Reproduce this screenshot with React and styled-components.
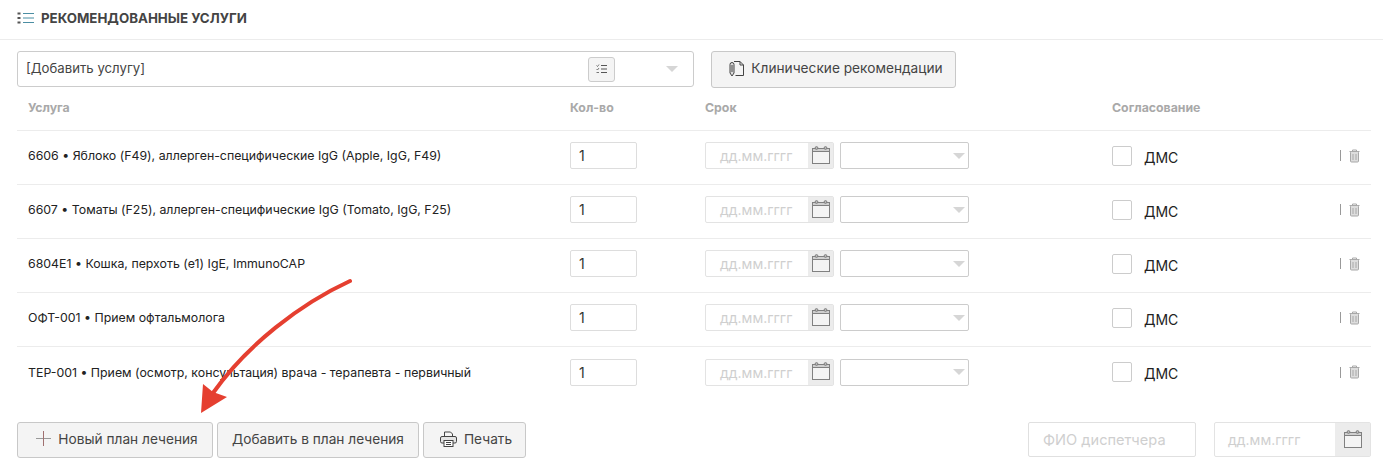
import React from "react";
import styled, { createGlobalStyle } from "styled-components";

const FONT = `"Inter", "Open Sans", "Liberation Sans", sans-serif`;
const Global = createGlobalStyle`
  html, body { margin: 0; padding: 0; background: #fff; }
  body { font-family: ${FONT}; color: #222; }
`;
const Page = styled.div`position: relative; width: 1383px; height: 475px; overflow: hidden;`;
const Header = styled.div`
  border-bottom: 1px solid #ececec; display: flex; align-items: center;
  gap: 7px; padding: 0 0 3px 17px; box-sizing: border-box; height: 40px;
`;
const Title = styled.h2`margin: 0; font-size: 13.300px; font-weight: 700; color: #444;`;
const Body = styled.div`padding: 11px 12px 0 17px;`;
const TopRow = styled.div`display: flex; gap: 17px; height: 37px;`;
const Select = styled.div`
  width: 677px; height: 36px; box-sizing: border-box; border: 1px solid #ccc; border-radius: 3px;
  display: flex; align-items: center; padding: 0 15px 3px 8px; font-size: 13.200px; color: #444;
`;
const SelectText = styled.span`flex: 1;`;
const ListBtn = styled.span`
  width: 27px; height: 25px; box-sizing: border-box; border: 1px solid #ccc; border-radius: 3px;
  background: #f4f4f4; display: flex; align-items: center; justify-content: center; margin: 3px 51px 0 0;
`;
const Caret = styled.span`
  width: 0; height: 0; border-left: 6.500px solid transparent; border-right: 6.500px solid transparent;
  border-top: 6px solid #d6d6d6; margin-top: ${p => p.$mt || 0}px;
`;
const Button = styled.button`
  height: ${p => p.$h || 36}px; width: ${p => p.$w}px; box-sizing: border-box; border: 1px solid #c8c8c8;
  border-radius: 3px; background: #f4f4f4; font: 13.700px ${FONT};
  color: #444; display: flex; align-items: center; justify-content: center; gap: 7px;
  padding: 0 0 3px ${p => p.$shift || 0}px;
`;
const Grid = styled.div`
  display: grid; grid-template-columns: 553px 135px 407px 259px;
`;
const HeadCell = styled.div`
  height: 43px; display: flex; align-items: center; padding: 0 0 3px ${p => p.$pad || 0}px;
  font-size: 12.300px; font-weight: 700; color: #a9a9a9; border-bottom: 1px solid #ececec; box-sizing: border-box;
`;
const Cell = styled.div`
  height: 54px; box-sizing: border-box; display: flex; align-items: center; padding-bottom: 4px;
  border-bottom: ${p => p.$last ? "none" : "1px solid #ececec"};
`;
const Service = styled(Cell)`padding-left: 11px; font-size: 12.350px; color: #222;`;
const Qty = styled.div`
  width: 67px; height: 27px; box-sizing: border-box; border: 1px solid #ddd; border-radius: 2px;
  font-size: 14px; color: #333; padding-left: 8px; display: flex; align-items: center;
`;
const DateBox = styled.div`
  width: ${p => p.$w}px; height: ${p => p.$h}px; box-sizing: border-box; border: 1px solid #e3e3e3; border-radius: 2px;
  display: flex; align-items: center; font-size: 14px; color: #cfcfcf;
`;
const DateText = styled.span`flex: 1; padding-left: ${p => p.$pad}px;`;
const CalBox = styled.span`
  width: ${p => p.$w}px; align-self: stretch; background: #ececec; display: flex; align-items: center; justify-content: center;
`;
const SmallSelect = styled.div`
  width: 129px; height: 27px; margin-left: 6px; box-sizing: border-box; border: 1px solid #ccc; border-radius: 2px;
  display: flex; align-items: center; justify-content: flex-end; padding-right: 3px;
`;
const Check = styled.span`
  width: 20px; height: 20px; box-sizing: border-box; border: 1px solid #ccc; border-radius: 2px; margin-right: 12px;
`;
const Dms = styled.span`font-size: 14px; color: #222; flex: 1; padding-top: 3px;`;
const Sep = styled.span`width: 1px; height: 11px; background: #999; margin: 0 8px 0 1px;`;
const TrashWrap = styled.span`display: flex; margin-right: 11px;`;
const Footer = styled.div`display: flex; margin-top: 21px; gap: 4px; align-items: flex-start;`;
const Spacer = styled.div`flex: 1;`;
const Field = styled.div`
  width: 168px; height: 35px; box-sizing: border-box; border: 1px solid #e0e0e0; border-radius: 2px;
  display: flex; align-items: center; padding-left: 14px; font-size: 14.600px; color: #cfcfcf; margin-right: 14px;
`;
const ArrowLayer = styled.svg`position: absolute; left: 0; top: 0; pointer-events: none;`;

const Cal = () => (
  <svg width="20" height="20" viewBox="0 0 20 20" fill="none" stroke="#808080" strokeWidth="1">
    <rect x="1.500" y="2.500" width="17" height="15" fill="#f4f4f4" />
    <rect x="1.500" y="2.500" width="17" height="3" fill="#cfcfcf" />
    <circle cx="5.500" cy="2" r="1.400" fill="#bbb" />
    <circle cx="14.500" cy="2" r="1.400" fill="#bbb" />
  </svg>
);
const Trash = () => (
  <svg width="11" height="14" viewBox="0 0 11 14" fill="none" stroke="#a8a8a8">
    <path d="M0.500 2.500h10M3.500 2.500V1h4v1.500" />
    <rect x="1.500" y="2.500" width="8" height="10.500" rx="1" fill="#ddd" />
    <path d="M4 5v6M7 5v6" />
  </svg>
);
const ListIcon = ({ color = "#4b8ea3", w = 17, h = 12 }) => (
  <svg width={w} height={h} viewBox="0 0 17 12" fill="none">
    <path d="M6 1.500h11M6 6h11M6 10.500h11" stroke={color} strokeWidth="1" />
    <rect x="0.500" y="0.500" width="3" height="2" fill="#555" />
    <rect x="0.500" y="5" width="3" height="2" fill="#555" />
    <rect x="0.500" y="9.500" width="3" height="2" fill="#555" />
  </svg>
);
const TaskIcon = () => (
  <svg width="11" height="10" viewBox="0 0 11 10" fill="none" stroke="#555">
    <path d="M5 1.500h6M5 5h6M5 8.500h6" />
    <path d="M0.500 1.500l1 1 1.500-2M0.500 5l1 1 1.500-2M0.500 8.500h2.500" strokeWidth="0.800" />
  </svg>
);
const ClipDoc = () => (
  <svg width="15" height="17" viewBox="0 0 15 17" fill="none" stroke="#444">
    <path d="M5 1.500h6l3.500 3.500v10.500h-8" />
    <path d="M11 1.500v3.500h3.500" />
    <path d="M1 4.500a2 2 0 0 1 4 0v8.500l-2 3-2-3z" fill="#ddd" />
    <path d="M3 5v7" />
  </svg>
);
const Printer = () => (
  <svg width="17" height="16" viewBox="0 0 17 16" fill="none" stroke="#444">
    <path d="M4.500 5V1h6l2 2v2" />
    <rect x="0.500" y="5.500" width="16" height="6.500" rx="1.500" fill="#e4e4e4" />
    <rect x="4" y="9.500" width="9" height="6" fill="#fff" />
    <path d="M6 11.500h5M6 13.500h5" />
  </svg>
);
const Plus = () => (
  <svg width="15" height="15" viewBox="0 0 15 15">
    <path d="M0 7.500h15" stroke="#999" />
    <path d="M7.500 0v15" stroke="#a07070" />
  </svg>
);

const services = [
  "6606 • Яблоко (F49), аллерген-специфические IgG (Apple, IgG, F49)",
  "6607 • Томаты (F25), аллерген-специфические IgG (Tomato, IgG, F25)",
  "6804E1 • Кошка, перхоть (e1) IgE, ImmunoCAP",
  "ОФТ-001 • Прием офтальмолога",
  "ТЕР-001 • Прием (осмотр, консультация) врача - терапевта - первичный",
];

export default function App() {
  return (
    <Page>
      <Global />
      <Header>
        <ListIcon />
        <Title>РЕКОМЕНДОВАННЫЕ УСЛУГИ</Title>
      </Header>
      <Body>
        <TopRow>
          <Select>
            <SelectText>[Добавить услугу]</SelectText>
            <ListBtn><TaskIcon /></ListBtn>
            <Caret $mt={3} />
          </Select>
          <Button $w={245} $h={37} $shift={5}><ClipDoc />Клинические рекомендации</Button>
        </TopRow>
        <Grid>
          <HeadCell $pad={11}>Услуга</HeadCell>
          <HeadCell>Кол-во</HeadCell>
          <HeadCell>Срок</HeadCell>
          <HeadCell>Согласование</HeadCell>
          {services.map((s, i) => {
            const last = i === services.length - 1;
            return (
              <React.Fragment key={s}>
                <Service $last={last}>{s}</Service>
                <Cell $last={last}><Qty>1</Qty></Cell>
                <Cell $last={last}>
                  <DateBox $w={129} $h={27}>
                    <DateText $pad={14}>дд.мм.гггг</DateText>
                    <CalBox $w={25}><Cal /></CalBox>
                  </DateBox>
                  <SmallSelect><Caret /></SmallSelect>
                </Cell>
                <Cell $last={last}>
                  <Check />
                  <Dms>ДМС</Dms>
                  <Sep />
                  <TrashWrap><Trash /></TrashWrap>
                </Cell>
              </React.Fragment>
            );
          })}
        </Grid>
        <Footer>
          <Button $w={196} $shift={4}><Plus />Новый план лечения</Button>
          <Button $w={202}>Добавить в план лечения</Button>
          <Button $w={103} $shift={3}><Printer />Печать</Button>
          <Spacer />
          <Field>ФИО диспетчера</Field>
          <DateBox $w={157} $h={35}>
            <DateText $pad={13}>дд.мм.гггг</DateText>
            <CalBox $w={35}><Cal /></CalBox>
          </DateBox>
        </Footer>
      </Body>
      <ArrowLayer width="1383" height="475" viewBox="0 0 1383 475">
        <path d="M350 281C300 304 247 345 213 393" fill="none" stroke="#e53f30" strokeWidth="4" strokeLinecap="round" />
        <path d="M201 413L203 384L213 392L227 397Z" fill="#e53f30" />
      </ArrowLayer>
    </Page>
  );
}
